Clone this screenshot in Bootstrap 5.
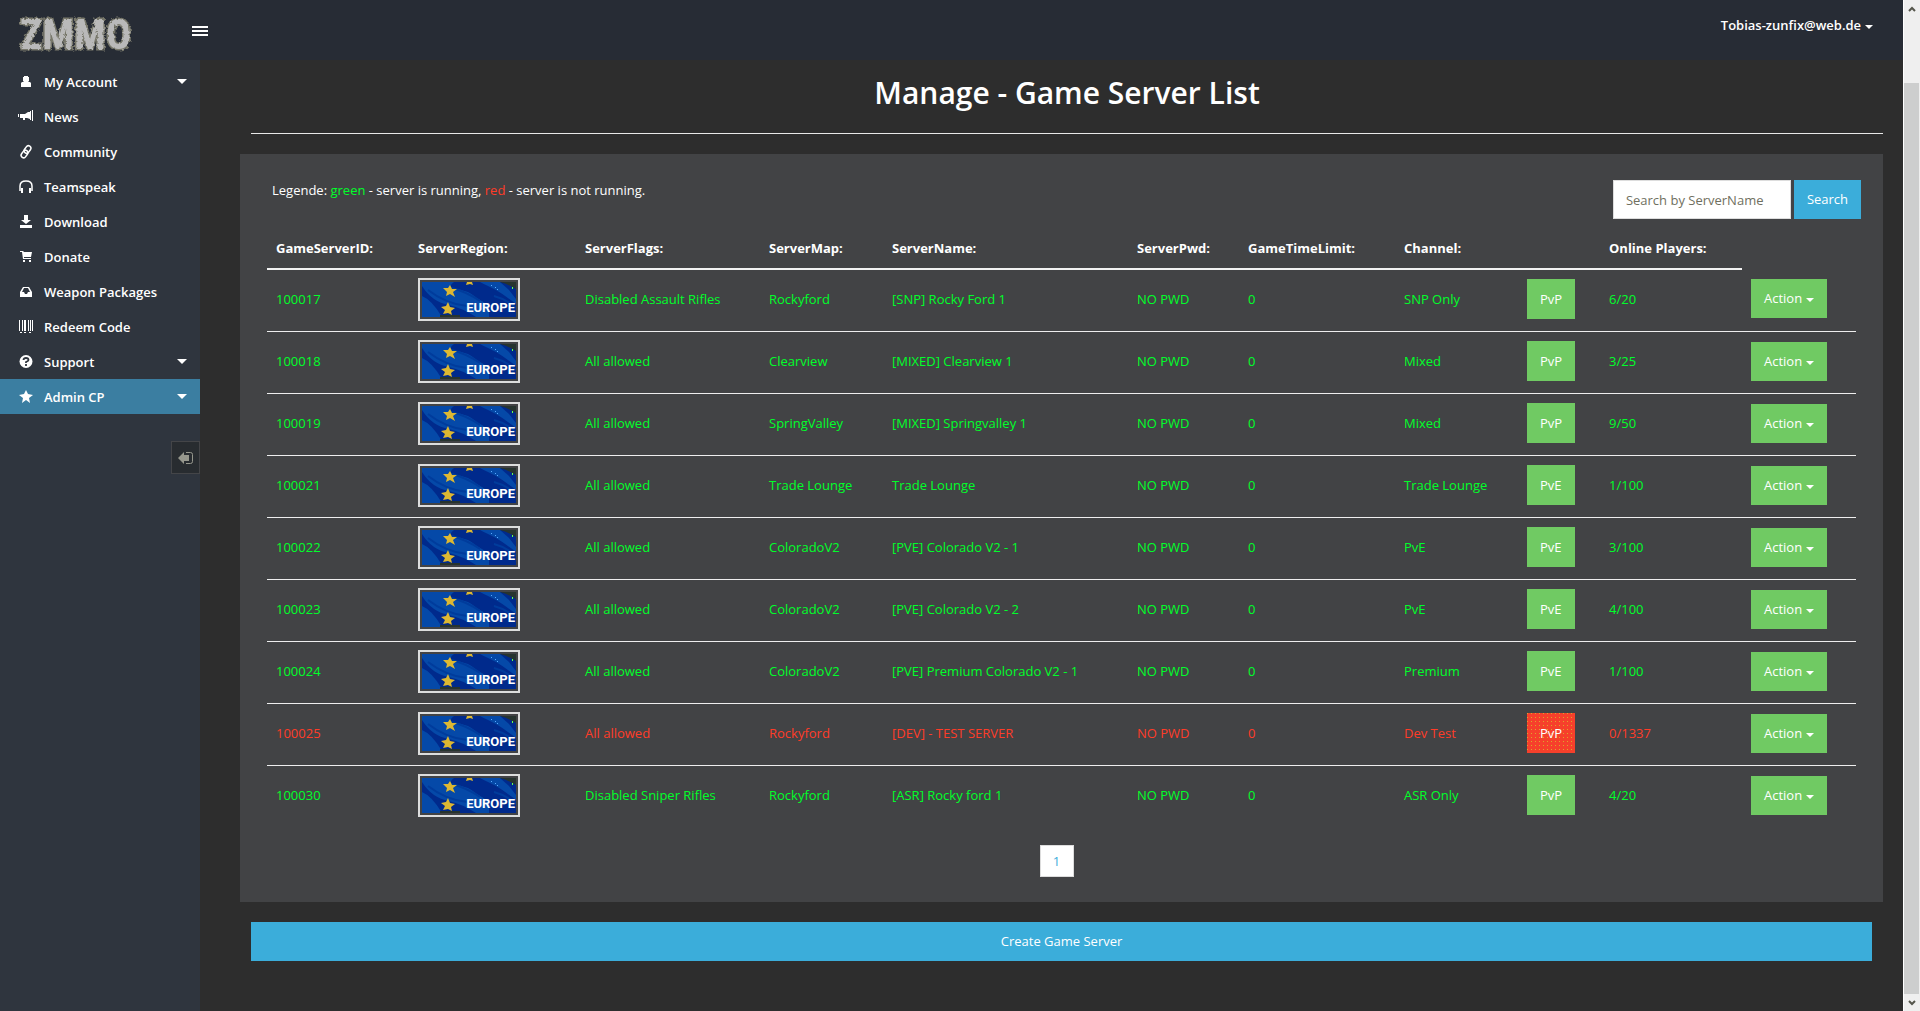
<!DOCTYPE html>
<html lang="en">
<head>
<meta charset="utf-8">
<meta name="viewport" content="width=device-width, initial-scale=1">
<title>Manage - Game Server List</title>
<link href="https://cdn.jsdelivr.net/npm/bootstrap@5.3.0/dist/css/bootstrap.min.css" rel="stylesheet">
<style>
body{font-family:"Open Sans","Noto Sans",sans-serif;font-size:13px;line-height:20px;color:#fff;background:#2d2d2d;--bs-border-radius:0}
.shell{min-height:100vh}
.page-col{min-width:0}
.topbar{height:60px;background:#272c35}
.logo-box{width:192px;padding-left:16px}
.logo-word{font-family:"Liberation Sans Narrow","Roboto Condensed",Roboto,sans-serif;font-weight:700;font-size:42px}
.burger{width:16px;height:10px;margin-top:26px;border:0;padding:0;background:linear-gradient(#fff 2px,transparent 2px 4px,#fff 4px 6px,transparent 6px 8px,#fff 8px)}
.user-btn{font-size:13px;line-height:20px;color:#fff;font-weight:600;padding:15px 30px 25px 0;border:0;background:none}
.tri::after{content:"";display:inline-block;border:4px solid transparent;border-top-color:#fff;border-bottom:0;margin-left:4px;vertical-align:1px}
.sidebar{width:200px;background:#2f353e;padding-top:4px}
.side-link{height:35px;padding:0 13px 0 18px;color:#fff;font-weight:600;border-radius:0;font-size:13px}
.side-link:hover{color:#fff}
.side-link.active{background:#3b7ea1}
.side-link svg{width:16px;height:16px;margin-right:10px;fill:#fff;flex:none}
.side-link.has-sub::after{content:"";margin-left:auto;border:5px solid transparent;border-top-color:#fff;border-bottom:0}
.collapse-btn{width:29px;height:33px;margin-top:27px;border:1px solid #444548;background:#282c30;padding:0}
.main-area{padding:0 20px 48px 40px;min-width:0}
.page-title{font-size:30px;line-height:34px;font-weight:600;margin:16px 0 23px 11px}
.title-rule{border:0;border-top:1px solid #e8e8e8;opacity:1;margin:0 0 20px 11px}
.panel{background:#424345;padding:26px 22px 25px 27px}
.legend-line{padding:0 5px}
.search-form{gap:3px}
.t-on{color:#00ff2a}.t-off{color:#ff3c28}
.search-in{width:178px;height:39px;border:1px solid #ddd;border-radius:0;font-size:13px;padding:0 12px;color:#555}
.search-in::placeholder{color:#6f6f60;opacity:1}
.btn-flat{font-size:13px;line-height:19px;padding:10px 13px;border:0;border-radius:0;color:#fff}
.btn-flat:hover{color:#fff}
.btn-mode{line-height:20px}
.b-blue{background:#3badda}.b-green{background:#70ca63}
.b-red{background:linear-gradient(#e0a02c,#e0a02c) 1px 1px/4px 5px,#f6402b;background:conic-gradient(from 0deg at 1px 1px,#f6402b 270deg,#dea62c 0) 0 0/4px 4px}
.srv{table-layout:fixed;width:100%;margin:9px 0 0}
.srv-wrap{margin-right:5px}
.srv th{padding:10px 9px;height:40px;font-weight:700;border-bottom:2px solid #f2f2f2;white-space:nowrap}
.srv td{height:62px;padding:0 9px 2px;vertical-align:middle;border-top:1px solid #eee;white-space:nowrap}
.srv tbody tr:first-child td{border-top:0}
.srv thead td{border:0;height:auto}
.flag{display:block;width:102px;height:43px}
.pager{margin:18px 15px 0 0}
.page-no{width:34px;height:32px;line-height:30px;border:1px solid #ddd;background:#fff;color:#3badda;text-align:center;text-decoration:none}
.create{margin:20px 11px 0}
.scroller{width:17px;background:#efefef;border-left:1px solid #fff;position:sticky;top:0;height:100vh}
.scroller svg{display:block;margin:6px auto 5px}
.scroll-gap{height:66px}
.thumb{background:#cdcece;margin-right:1px}
</style>
</head>
<body>
<svg width="0" height="0" class="position-absolute" aria-hidden="true">
<filter id="rough" x="-5%" y="-5%" width="110%" height="110%"><feTurbulence type="fractalNoise" baseFrequency=".35" numOctaves="2" seed="4" result="n"/><feDisplacementMap in="SourceGraphic" in2="n" scale="4"/></filter>
<symbol id="eu" viewBox="0 0 102 43">
<rect width="102" height="43" fill="#dcdddd"/><rect x="2" y="2" width="98" height="39" fill="#424345"/>
<svg x="4" y="4" width="94" height="35" viewBox="4 4 94 35">
<rect x="4" y="4" width="94" height="35" fill="#002a8c"/>
<path d="M4 4h32q-5 3-2 6 16 2 25 10 7 4 12 8v11H58Q44 30 31 27 14 24 4 8zM4 18q10 4 20 21H4zM62 4h20l9 8 7 9v5Q88 18 78 12 68 7 62 4z" fill="#0549a8"/>
<path d="M34 10q15 4 28 13M10 12q18 14 39 16M76 18q12 3 22 12" stroke="#003c9c" stroke-width="2" fill="none"/>
<path d="M82 4h16v7q-8-5-16-7zM22 37h20v2H22z" fill="#27342f"/>
<g fill="#ddb832"><path d="M32 7l2 4 5 0-4 3 2 5-5-3-4 2 1-4-4-4 5 0z"/><path d="M30 24l2 5 5 1-4 3 1 4-4-2-5 1 2-4-4-3 5-1zM49 4h5l1 3-3-1-4 1z"/></g>
<path d="M73 7h1v1h-1zM77 9h1v1h-1zM79 11h1v1h-1z" fill="#58a8ff"/><path d="M94 9h1v2h-1z" fill="#6f4"/>
</svg>
<text x="97" y="34" text-anchor="end" font-family="Roboto" font-weight="700" font-size="13" fill="#fff">EUROPE</text>
</symbol>
</svg>
<div class="shell d-flex">
<div class="page-col flex-grow-1 d-flex flex-column">
<header class="topbar d-flex align-items-start">
<a class="logo-box d-block pt-2" href="#">
<svg width="130" height="48" viewBox="0 0 130 48">
<g filter="url(#rough)"><text class="logo-word" x="4" y="41" fill="#b9b9b9" stroke="#77776a" stroke-width="3" paint-order="stroke">ZMMO</text></g>
</svg></a>
<button class="burger" type="button" aria-label="Toggle menu"></button>
<button class="user-btn tri ms-auto" type="button">Tobias-zunfix@web.de</button>
</header>
<div class="d-flex flex-grow-1">
<aside class="sidebar flex-shrink-0">
<nav class="nav flex-column" id="side"></nav>
<div class="d-flex justify-content-end"><button class="collapse-btn" type="button" aria-label="Collapse sidebar"><svg width="16" height="14" viewBox="0 0 16 14" class="d-block mx-auto"><path d="M0 7l6-6v3h5v6H6v3z" fill="#96978d"/><path d="M8 1.500h4.500q2 0 2 2v7q0 2-2 2H8" fill="none" stroke="#96978d"/></svg></button></div>
</aside>
<main class="main-area flex-grow-1">
<h1 class="page-title text-center">Manage - Game Server List</h1>
<hr class="title-rule">
<section class="panel">
<div class="d-flex justify-content-between">
<p class="legend-line mb-0">Legende: <span class="t-on">green</span> - server is running, <span class="t-off">red</span> - server is not running.</p>
<form class="search-form d-flex"><input class="form-control search-in" type="text" placeholder="Search by ServerName" aria-label="Search by ServerName"><button class="btn btn-flat b-blue" type="button">Search</button></form>
</div>
<div class="srv-wrap">
<table class="srv"><colgroup><col style="width:142px"><col style="width:167px"><col style="width:184px"><col style="width:123px"><col style="width:245px"><col style="width:111px"><col style="width:156px"><col style="width:123px"><col style="width:82px"><col style="width:142px"><col style="width:114px"></colgroup>
<thead><tr><th>GameServerID:</th><th>ServerRegion:</th><th>ServerFlags:</th><th>ServerMap:</th><th>ServerName:</th><th>ServerPwd:</th><th>GameTimeLimit:</th><th>Channel:</th><th></th><th>Online Players:</th><td></td></tr></thead>
<tbody id="rows"></tbody></table>
</div>
<div class="pager d-flex justify-content-center"><a class="page-no" href="#">1</a></div>
</section>
<div class="create d-grid"><button class="btn btn-flat b-blue" type="button">Create Game Server</button></div>
</main>
</div>
</div>
<div class="scroller d-flex flex-column flex-shrink-0" aria-hidden="true">
<svg width="8" height="6" viewBox="0 0 8 6"><path d="M1 5l3-3 3 3" fill="none" stroke="#55564c" stroke-width="2"/></svg>
<div class="scroll-gap"></div><div class="thumb flex-grow-1"></div>
<svg width="8" height="6" viewBox="0 0 8 6"><path d="M1 1l3 3 3-3" fill="none" stroke="#55564c" stroke-width="2"/></svg>
</div>
</div>
<script src="https://cdn.jsdelivr.net/npm/bootstrap@5.3.0/dist/js/bootstrap.bundle.min.js"></script>
<script>
const icons={
user:'<path d="M6 2h4v1h1v4l-1 1h2l1 1v4H3V9l1-1h2L5 7V3h1z"/>',
horn:'<path d="M0 5h1v3H0zM2 5h5l3-2h2V2h1v9h-1v-1l-3-1H7v2H5V9H2zM14 1h1v11h-1z"/>',
link:'<g fill="none" stroke="#fff" stroke-width="1.500"><rect x="7" y="1.500" width="5" height="8" rx="2.500" transform="rotate(35 9.500 5.500)"/><rect x="4" y="6" width="5" height="8" rx="2.500" transform="rotate(35 6.500 10)"/></g>',
head:'<path d="M2 12V7q0-5 6-5t6 5v5" fill="none" stroke="#fff" stroke-width="1.500"/><path d="M3 9h2v5H3zM11 9h2v5h-2z"/>',
down:'<path d="M6 1h4v5h3L8 10 3 6h3zM2 11h12v3H2z"/>',
cart:'<path d="M2 2h3l1 1h8l-1 5H6v1h7v1H5L4 3H2zM5 11h2v2H5zM11 11h2v2h-2z"/>',
inbox:'<path d="M5 3h6l3 5v5H2V8zM6 4L4 8h2l1 2h2l1-2h2l-2-4z" fill-rule="evenodd"/>',
bar:'<path d="M1 1h1v11H1zM4 1h1v11H4zM6 1h2v11H6zM10 1h1v11h-1zM12 1h1v11h-1zM14 1h1v11h-1zM2 13h2v1H2zM6 13h2v1H6zM11 13h2v1h-2z"/>',
help:'<circle cx="8" cy="7.500" r="6.500"/><path d="M5.500 6Q5.500 4 8 4t2.500 2Q10.500 7 8 8v1M8 10v2" fill="none" stroke="#2f353e" stroke-width="1.800"/>',
star:'<path d="M8 1l2 4 5 1-4 3 1 5-4-3-4 3 1-5-4-3 5-1z"/>'};
side.innerHTML=[['user','My Account',1],['horn','News'],['link','Community'],['head','Teamspeak'],['down','Download'],['cart','Donate'],['inbox','Weapon Packages'],['bar','Redeem Code'],['help','Support',1],['star','Admin CP',1]]
.map(([i,t,s])=>`<a href="#" class="nav-link side-link d-flex align-items-center ${s?'has-sub':''} ${i=='star'?'active':''}"><svg viewBox="0 0 16 16">${icons[i]}</svg>${t}</a>`).join('');
rows.innerHTML=[
['100017','Disabled Assault Rifles','Rockyford','[SNP] Rocky Ford 1','SNP Only','PvP','6/20'],
['100018','All allowed','Clearview','[MIXED] Clearview 1','Mixed','PvP','3/25'],
['100019','All allowed','SpringValley','[MIXED] Springvalley 1','Mixed','PvP','9/50'],
['100021','All allowed','Trade Lounge','Trade Lounge','Trade Lounge','PvE','1/100'],
['100022','All allowed','ColoradoV2','[PVE] Colorado V2 - 1','PvE','PvE','3/100'],
['100023','All allowed','ColoradoV2','[PVE] Colorado V2 - 2','PvE','PvE','4/100'],
['100024','All allowed','ColoradoV2','[PVE] Premium Colorado V2 - 1','Premium','PvE','1/100'],
['100025','All allowed','Rockyford','[DEV] - TEST SERVER','Dev Test','PvP','0/1337'],
['100030','Disabled Sniper Rifles','Rockyford','[ASR] Rocky ford 1','ASR Only','PvP','4/20']
].map(r=>{const off=r[0]=='100025';return `<tr class="${off?'t-off':'t-on'}"><td>${r[0]}</td><td><svg class="flag" role="img" aria-label="Europe"><use href="#eu"/></svg></td><td>${r[1]}</td><td>${r[2]}</td><td>${r[3]}</td><td>NO PWD</td><td>0</td><td>${r[4]}</td><td><button type="button" class="btn btn-flat btn-mode ${off?'b-red':'b-green'}">${r[5]}</button></td><td>${r[6]}</td><td><button type="button" class="btn btn-flat b-green tri">Action</button></td></tr>`}).join('');
</script>
</body>
</html>
